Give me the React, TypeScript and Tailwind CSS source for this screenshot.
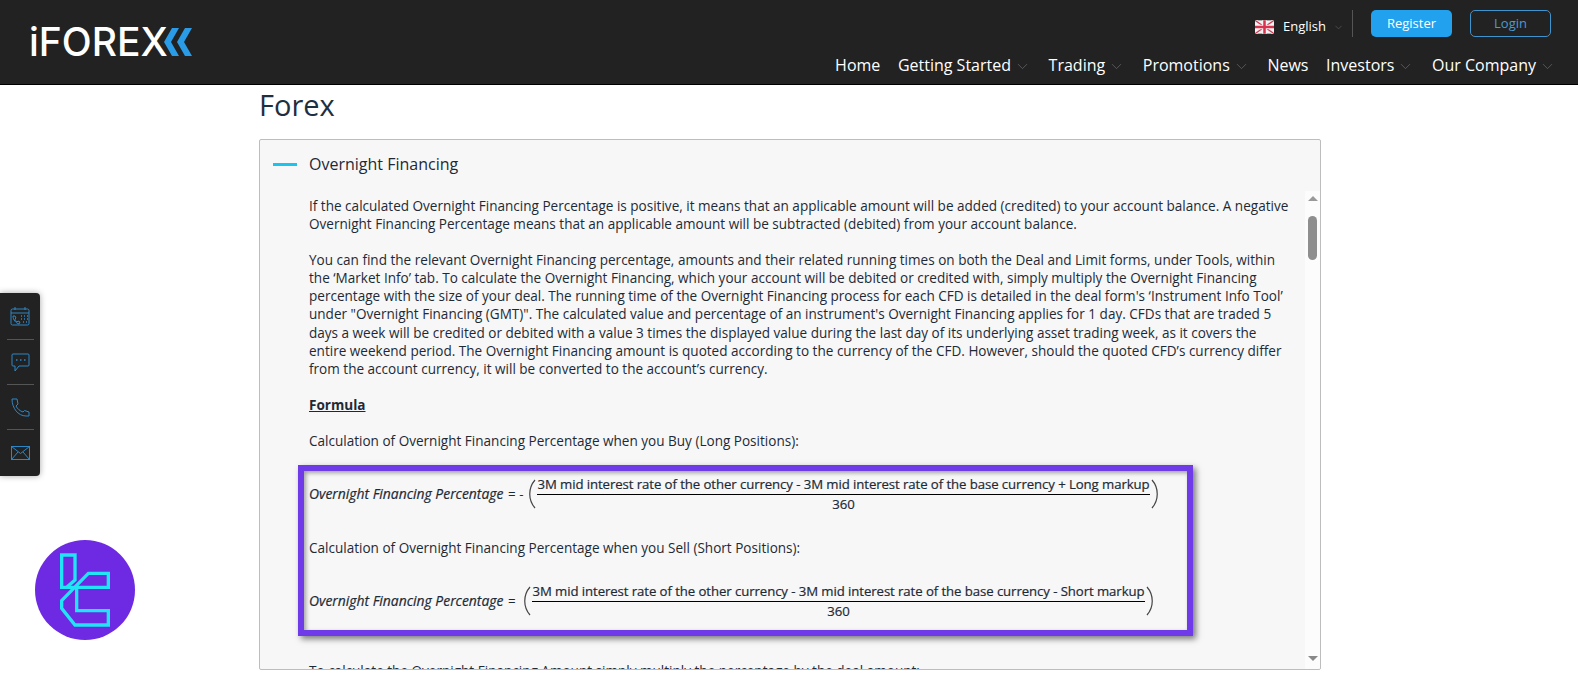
import React from 'react';
import { ChevronDown } from 'lucide-react';

const NAV = [
  { label: 'Home', caret: false },
  { label: 'Getting Started', caret: true },
  { label: 'Trading', caret: true },
  { label: 'Promotions', caret: true },
  { label: 'News', caret: false },
  { label: 'Investors', caret: true },
  { label: 'Our Company', caret: true },
];

const INTRO = [
  { text: 'If the calculated Overnight Financing Percentage is positive, it means that an applicable amount will be added (credited) to your account balance. A negative', width: 'w-[976px]' },
  { text: 'Overnight Financing Percentage means that an applicable amount will be subtracted (debited) from your account balance.', width: 'w-[765px]' },
];

const DETAILS = [
  { text: 'You can find the relevant Overnight Financing percentage, amounts and their related running times on both the Deal and Limit forms, under Tools, within', width: 'w-[963px]' },
  { text: 'the ‘Market Info’ tab. To calculate the Overnight Financing, which your account will be debited or credited with, simply multiply the Overnight Financing', width: 'w-[944px]' },
  { text: "percentage with the size of your deal. The running time of the Overnight Financing process for each CFD is detailed in the deal form's ‘Instrument Info Tool’", width: 'w-[971px]' },
  { text: 'under "Overnight Financing (GMT)". The calculated value and percentage of an instrument\'s Overnight Financing applies for 1 day. CFDs that are traded 5', width: 'w-[959px]' },
  { text: 'days a week will be credited or debited with a value 3 times the displayed value during the last day of its underlying asset trading week, as it covers the', width: 'w-[944px]' },
  { text: 'entire weekend period. The Overnight Financing amount is quoted according to the currency of the CFD. However, should the quoted CFD’s currency differ', width: 'w-[969px]' },
  { text: 'from the account currency, it will be converted to the account’s currency.', width: 'w-[456px]' },
];

const Line = ({ text, width }: { text: string; width: string }) => (
  <span className={`block ${width} [text-align-last:justify]`}>{text}</span>
);

const Caret = () => (
  <ChevronDown size={17} strokeWidth={1} className="text-[#6b6b6b] ml-[3px] mt-[3px]" />
);

const UkFlag = () => (
  <svg width="19" height="14" viewBox="0 0 60 42">
    <rect width="60" height="42" fill="#f4f4f4" />
    <path d="M0 0L60 42M60 0L0 42" stroke="#e8e8e8" strokeWidth="9" />
    <path d="M0 0L60 42M60 0L0 42" stroke="#d8344f" strokeWidth="4" />
    <path d="M30 0V42M0 21H60" stroke="#f4f4f4" strokeWidth="14" />
    <path d="M30 0V42M0 21H60" stroke="#d8344f" strokeWidth="8" />
  </svg>
);

const Logo = () => (
  <div className="flex items-center">
    <span className="font-['Inter',sans-serif] font-medium text-[39px] leading-none text-white">iFOREX</span>
    <svg width="29" height="28" viewBox="0 0 29 28" className="-ml-[4px]">
      <path d="M15 0H8L0 14L8 28H15L7 14Z" fill="#2a9be6" />
      <path d="M28 0H21L13 14L21 28H28L20 14Z" fill="#2a9be6" />
    </svg>
  </div>
);

const Header = () => (
  <header className="h-[85px] bg-[#222222] border-b border-black flex justify-between pl-[29px] pr-[22px] shrink-0">
    <div className="pt-[22px]">
      <Logo />
    </div>
    <div className="flex flex-col items-end">
      <div className="flex items-center pt-[10px] pr-[5px]">
        <div className="flex items-center gap-[9px] mr-[8px] mt-[7px]">
          <UkFlag />
          <span className="text-[13px] text-white">English</span>
          <ChevronDown size={11} strokeWidth={1} className="text-[#777] -ml-[2px]" />
        </div>
        <div className="w-px h-[27px] bg-[#555] mr-[18px]" />
        <button className="w-[81px] h-[27px] rounded-[5px] bg-[#21a1ee] text-[13px] text-white mr-[18px]">Register</button>
        <button className="w-[81px] h-[27px] rounded-[5px] border border-[#3f93cf] text-[13px] text-[#4a9ad4]">Login</button>
      </div>
      <nav className="flex items-center gap-[17.600px] mt-[16px]">
        {NAV.map((item) => (
          <div key={item.label} className="flex items-center">
            <span className="text-[16px] leading-[24px] text-white">{item.label}</span>
            {item.caret && <Caret />}
          </div>
        ))}
      </nav>
    </div>
  </header>
);

const Fraction = ({ top }: { top: string }) => (
  <div className="flex items-center">
    <svg width="9" height="30" viewBox="0 0 9 30" className="text-[#444]">
      <path d="M7 1C0 9 0 21 7 29" fill="none" stroke="currentColor" strokeWidth="1.2" />
    </svg>
    <div className="flex flex-col items-center text-[13.200px] leading-[18px] text-[#1d2a36] [-webkit-text-stroke:0.2px_#1d2a36]">
      <span className="w-[613px] text-center whitespace-nowrap tracking-[-0.08px] border-b border-black pb-[1px]">{top}</span>
      <span>360</span>
    </div>
    <svg width="9" height="30" viewBox="0 0 9 30" className="text-[#444]">
      <path d="M2 1C9 9 9 21 2 29" fill="none" stroke="currentColor" strokeWidth="1.2" />
    </svg>
  </div>
);

const Sidebar = () => (
  <div className="absolute left-0 top-[293px] w-[40px] h-[183px] bg-[#222222] rounded-r-[4px] shadow-[0_0_6px_rgba(0,0,0,0.35)] flex flex-col items-center">
    {/* calendar */}
    <div className="h-[46px] w-full flex items-center justify-center">
      <svg width="20" height="20" viewBox="0 0 20 20" fill="none" stroke="#2f86c5" strokeWidth="1">
        <rect x="1" y="3" width="18" height="16" rx="1.5" />
        <path d="M1 7H19M5 1V4M15 1V4" />
        <path d="M3 10c0 4 3 7 6 8l1-2-2-1-1 1c-1-1-2-2-2-3l1-1-1-2z" />
        <path d="M11 10h1M14 10h1M17 10h1M11 13h1M14 13h1M17 13h1M13 16h1M16 16h1" strokeWidth="1.4" />
      </svg>
    </div>
    <div className="w-[27px] h-px bg-[#555]" />
    {/* chat */}
    <div className="h-[44px] w-full flex items-center justify-center">
      <svg width="19" height="19" viewBox="0 0 19 19" fill="none" stroke="#2f86c5" strokeWidth="1">
        <path d="M2 1H17a1 1 0 0 1 1 1V12a1 1 0 0 1-1 1H8L4 18V13H2a1 1 0 0 1-1-1V2a1 1 0 0 1 1-1Z" />
        <path d="M5 7h1.5M9 7h1.5M13 7h1.5" strokeWidth="1.5" />
      </svg>
    </div>
    <div className="w-[27px] h-px bg-[#555]" />
    {/* phone */}
    <div className="h-[44px] w-full flex items-center justify-center">
      <svg width="19" height="19" viewBox="0 0 19 19" fill="none" stroke="#2f86c5" strokeWidth="1">
        <path d="M1 1H6L7 6L5 8C6.500 11 9 13 12 14L13.500 12.500L18 14V18H15C7 18 1 10 1 1Z" />
      </svg>
    </div>
    <div className="w-[27px] h-px bg-[#555]" />
    {/* mail */}
    <div className="flex-1 w-full flex items-center justify-center">
      <svg width="19" height="14" viewBox="0 0 19 14" fill="none" stroke="#2f86c5" strokeWidth="1">
        <rect x="0.500" y="0.500" width="18" height="13" />
        <path d="M0.500 0.500L9.500 7.500L18.500 0.500M0.500 13.500L7 6M18.500 13.500L12 6" />
      </svg>
    </div>
  </div>
);

const Badge = () => (
  <div className="absolute left-[35px] top-[540px] w-[100px] h-[100px] rounded-full bg-[#6d2ae2]">
    <svg width="100" height="100" viewBox="45 30 300 300" fill="none" stroke="#1fe5f5" strokeWidth="10" strokeLinejoin="miter">
      <path d="M125 75H165V150L140 172H125Z" />
      <path d="M140 172H265V130H205L125 212V235L165 285H265V242H170V175" />
    </svg>
  </div>
);

const Scrollbar = () => (
  <div className="absolute right-0 top-[51px] bottom-0 w-[15px] bg-white/60 flex flex-col items-center">
    <div className="mt-[5px] w-0 h-0 border-l-[5px] border-r-[5px] border-b-[5px] border-l-transparent border-r-transparent border-b-[#999]" />
    <div className="mt-[15px] w-[9px] h-[44px] rounded-[5px] bg-[#8e8e8e]" />
    <div className="mt-auto mb-[8px] w-0 h-0 border-l-[5px] border-r-[5px] border-t-[5px] border-l-transparent border-r-transparent border-t-[#888]" />
  </div>
);

export default function App() {
  return (
    <div className="relative w-[1578px] h-[675px] overflow-hidden bg-white flex flex-col font-['Open_Sans',sans-serif]">
      <Header />
      <main className="pl-[259px] pr-[257px]">
        <h1 className="text-[29px] leading-[40px] text-[#1d3042]">Forex</h1>
        <section className="relative mt-[14px] h-[531px] overflow-hidden bg-[#f7f7f7] border border-[#bdbdbd] rounded-[2px]">
          <div className="flex items-center h-[48px]">
            <div className="ml-[13px] w-[24px] h-[3px] bg-[#1cc3ec]" />
            <h2 className="ml-[12px] text-[16px] text-[#1d2a36]">Overnight Financing</h2>
          </div>
          <div className="pl-[49px] pt-[9px] text-[13.550px] leading-[18.100px] text-[#1d2a36] whitespace-nowrap">
            <p className="mb-[18px]">
              {INTRO.map((line) => <Line key={line.text} {...line} />)}
            </p>
            <p className="mb-[18px]">
              {DETAILS.map((line) => <Line key={line.text} {...line} />)}
            </p>
            <p className="mb-[18px] font-bold underline">Formula</p>
            <p>Calculation of Overnight Financing Percentage when you Buy (Long Positions):</p>
            {/* highlighted formulas */}
            <div className="-ml-[11px] mt-[15px] w-[895px] h-[171px] border-[6px] border-[#6f3be8] shadow-[3px_3px_6px_rgba(0,0,0,0.5),inset_2px_2px_4px_rgba(0,0,0,0.35)] pl-[5px] pt-[4px]">
              <div className="flex items-center h-[38px]">
                <span className="italic text-[13.900px] [-webkit-text-stroke:0.2px_#1d2a36] w-[195px]">Overnight Financing Percentage</span>
                <span className="ml-[4px] w-[20px] text-[13.400px]">= -</span>
                <Fraction top="3M mid interest rate of the other currency - 3M mid interest rate of the base currency + Long markup" />
              </div>
              <p className="mt-[26px]">Calculation of Overnight Financing Percentage when you Sell (Short Positions):</p>
              <div className="flex items-center h-[38px] mt-[25px]">
                <span className="italic text-[13.900px] [-webkit-text-stroke:0.2px_#1d2a36] w-[195px]">Overnight Financing Percentage</span>
                <span className="ml-[4px] w-[15px] text-[13.400px]">=</span>
                <Fraction top="3M mid interest rate of the other currency - 3M mid interest rate of the base currency - Short markup" />
              </div>
            </div>
            <p className="mt-[26px]">To calculate the Overnight Financing Amount simply multiply the percentage by the deal amount:</p>
          </div>
          <Scrollbar />
        </section>
      </main>
      <Sidebar />
      <Badge />
    </div>
  );
}
